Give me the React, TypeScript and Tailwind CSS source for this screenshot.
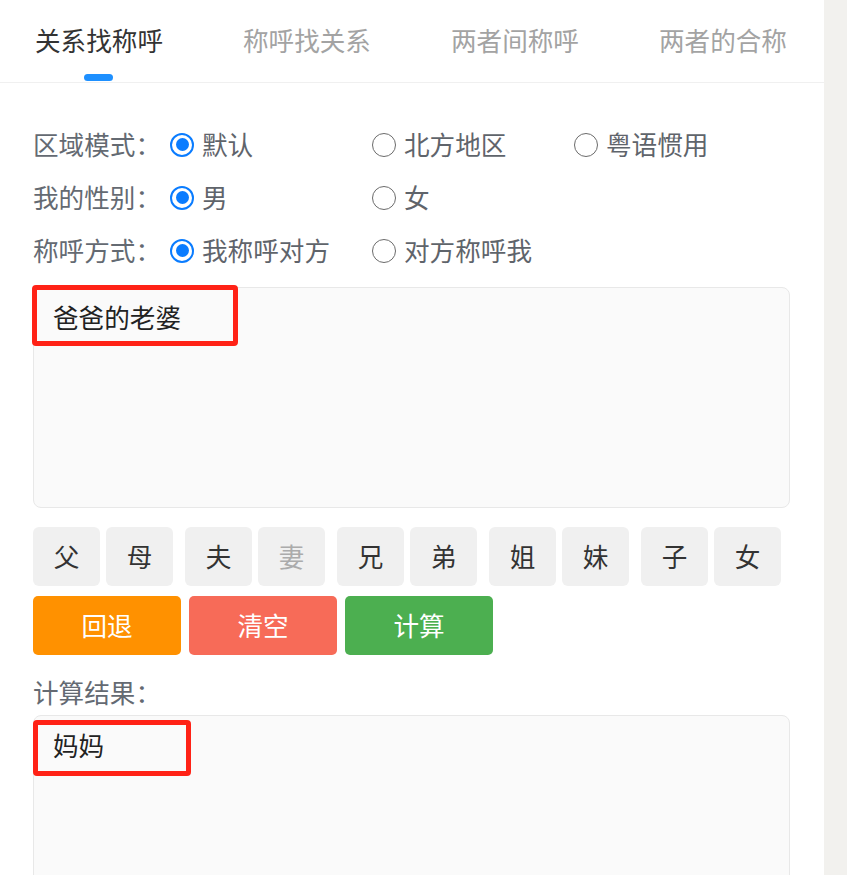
import React from "react";

const FONT = { fontFamily: '"Noto Sans CJK SC", "Noto Sans", sans-serif' };

function Radio({ checked, label }: { checked: boolean; label: string }) {
  return (
    <div className="flex w-[202px] items-center gap-[8px]">
      {checked ? (
        <span className="flex h-[24px] w-[24px] shrink-0 items-center justify-center rounded-full border-[2.5px] border-[#0a7cff] bg-white">
          <span className="h-[13px] w-[13px] rounded-full bg-[#0a7cff]" />
        </span>
      ) : (
        <span className="h-[24px] w-[24px] shrink-0 rounded-full border-[1.5px] border-[#6b6b6b] bg-white" />
      )}
      <span className="text-[#5f646b]">{label}</span>
    </div>
  );
}

function Row({ label, options }: { label: string; options: { t: string; c: boolean }[] }) {
  return (
    <div className="flex h-[53px] items-center">
      <span className="w-[137px] shrink-0 text-[#646a72]">{label}</span>
      {options.map((o) => (
        <Radio key={o.t} checked={o.c} label={o.t} />
      ))}
    </div>
  );
}

function Key({ ch, disabled }: { ch: string; disabled?: boolean }) {
  return (
    <div
      className={
        "flex h-[59px] w-[67px] items-center justify-center rounded-[6px] bg-[#f0f0f0] " +
        (disabled ? "text-[#ababab]" : "text-[#333333]")
      }
    >
      {ch}
    </div>
  );
}

export default function App() {
  const tabs = ["关系找称呼", "称呼找关系", "两者间称呼", "两者的合称"];
  const pairs = [
    ["父", "母"],
    ["夫", "妻"],
    ["兄", "弟"],
    ["姐", "妹"],
    ["子", "女"],
  ];
  return (
    <div className="flex h-[875px] w-[847px] overflow-hidden bg-white text-[25.6px] leading-[38.4px]" style={FONT}>
      <div className="w-[824px] shrink-0 bg-white">
        <div className="flex h-[83px] gap-[80px] border-b border-[#f0f0f0] pl-[35px] pt-[21px]">
          {tabs.map((t, i) => (
            <div key={t} className="flex flex-col items-center">
              <span className={i === 0 ? "text-[#333333]" : "text-[#a3a3a3]"}>{t}</span>
              {i === 0 && <span className="mt-[15px] h-[7px] w-[29px] rounded-full bg-[#1e90ff]" />}
            </div>
          ))}
        </div>

        <div className="px-[33px] pt-[35px]">
          <Row
            label="区域模式："
            options={[
              { t: "默认", c: true },
              { t: "北方地区", c: false },
              { t: "粤语惯用", c: false },
            ]}
          />
          <Row
            label="我的性别："
            options={[
              { t: "男", c: true },
              { t: "女", c: false },
            ]}
          />
          <Row
            label="称呼方式："
            options={[
              { t: "我称呼对方", c: true },
              { t: "对方称呼我", c: false },
            ]}
          />

          <div className="relative mt-[10px] h-[221px] w-[757px] rounded-[8px] border border-[#e8e8e8] bg-[#fafafa] pl-[19px] pt-[10px] text-[#222222]">
            爸爸的老婆
            <div className="absolute left-[-2px] top-[-3px] h-[61px] w-[206px] rounded-[4px] border-[5px] border-[#ff2216]" />
          </div>

          <div className="mt-[19px] flex gap-[12px]">
            {pairs.map((p) => (
              <div key={p[0]} className="flex gap-[6px]">
                <Key ch={p[0]} />
                <Key ch={p[1]} disabled={p[1] === "妻"} />
              </div>
            ))}
          </div>

          <div className="mt-[10px] flex gap-[8px] text-white">
            <div className="flex h-[59px] w-[148px] items-center justify-center rounded-[5px] bg-[#ff9100]">回退</div>
            <div className="flex h-[59px] w-[148px] items-center justify-center rounded-[5px] bg-[#f76b58]">清空</div>
            <div className="flex h-[59px] w-[148px] items-center justify-center rounded-[5px] bg-[#4caf50]">计算</div>
          </div>

          <div className="mt-[18px] text-[#646a72]">计算结果：</div>

          <div className="relative mt-[4px] h-[221px] w-[757px] rounded-[8px] border border-[#e8e8e8] bg-[#fafafa] pl-[19px] pt-[10px] text-[#222222]">
            妈妈
            <div className="absolute left-[-1px] top-[4px] h-[56px] w-[158px] rounded-[4px] border-[5px] border-[#ff2216]" />
          </div>
        </div>
      </div>
      <div className="flex-1 bg-[#f2f1ee]" />
    </div>
  );
}
